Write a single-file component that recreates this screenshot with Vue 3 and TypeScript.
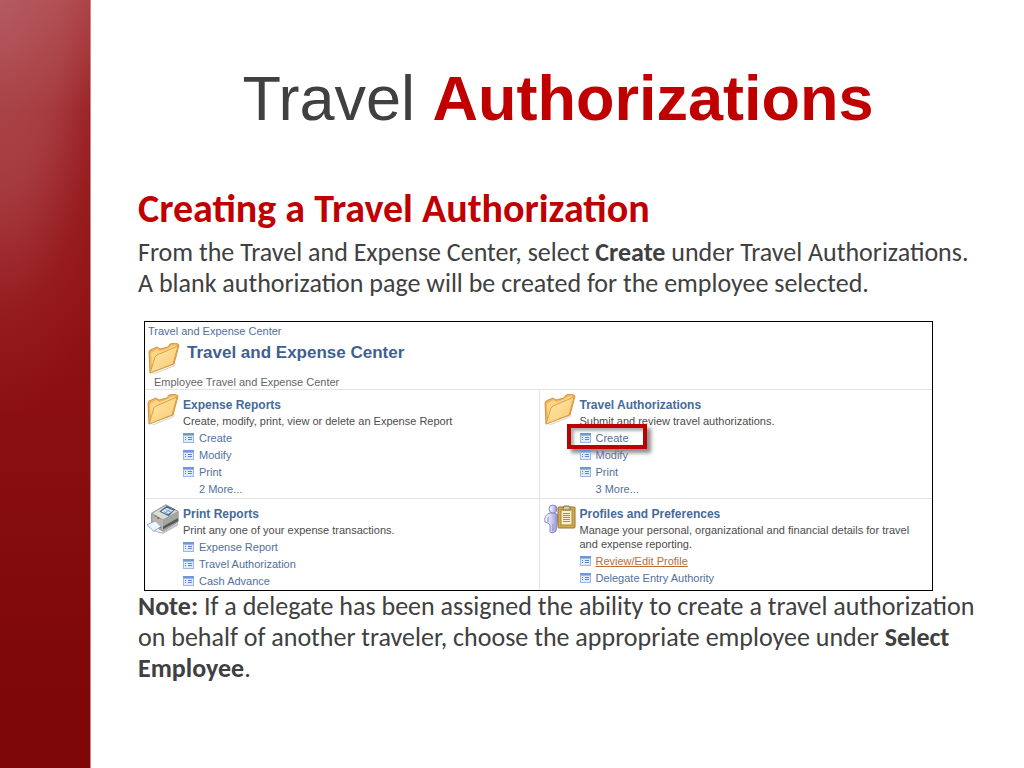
<script setup lang="ts">
interface Entry {
  label: string
  icon: boolean
  active?: boolean
  marked?: boolean
}
interface Section {
  title: string
  text: string
  art: 'folder' | 'printer' | 'profile'
  entries: Entry[]
}

const link = (label: string): Entry => ({ label, icon: true })
const more = (label: string): Entry => ({ label, icon: false })

const sections: Section[] = [
  {
    title: 'Expense Reports',
    text: 'Create, modify, print, view or delete an Expense Report',
    art: 'folder',
    entries: [link('Create'), link('Modify'), link('Print'), more('2 More...')],
  },
  {
    title: 'Travel Authorizations',
    text: 'Submit and review travel authorizations.',
    art: 'folder',
    entries: [{ label: 'Create', icon: true, marked: true }, link('Modify'), link('Print'), more('3 More...')],
  },
  {
    title: 'Print Reports',
    text: 'Print any one of your expense transactions.',
    art: 'printer',
    entries: [link('Expense Report'), link('Travel Authorization'), link('Cash Advance')],
  },
  {
    title: 'Profiles and Preferences',
    text: 'Manage your personal, organizational and financial details for travel and expense reporting.',
    art: 'profile',
    entries: [{ label: 'Review/Edit Profile', icon: true, active: true }, link('Delegate Entry Authority')],
  },
]
</script>

<template>
  <div class="slide">
    <div class="band"></div>
    <main class="content">
      <h1>Travel <strong>Authorizations</strong></h1>
      <h2>Creating a Travel Authorization</h2>
      <p class="copy">
        From the Travel and Expense Center, select <b>Create</b> under Travel Authorizations. A blank
        authorization page will be created for the employee selected.
      </p>

      <svg class="defs" width="0" height="0" aria-hidden="true">
        <defs>
          <linearGradient id="paper" x1="0" y1="0" x2="1" y2="1">
            <stop offset="0" stop-color="#ffe9a8" />
            <stop offset="1" stop-color="#fac973" />
          </linearGradient>
          <linearGradient id="body" x1="0" y1="0" x2="1" y2="0">
            <stop offset="0" stop-color="#ffffff" />
            <stop offset="0.5" stop-color="#d0d0f4" />
            <stop offset="1" stop-color="#8c8cd0" />
          </linearGradient>
          <symbol id="folder" viewBox="0 0 32 32">
            <path d="M4 31 26 22 28 20 27 23 7 31Z" fill="#dcd9d2" />
            <path d="M1 9 2 7 9 4 12 6 20 4 22 1 28 0 31 2 26 21 2 30Z" fill="#f3b65c" stroke="#cf9446" />
            <path d="M3 10 9 6 12 8 21 5 23 3 28 2 27 5 7 14 4 24Z" fill="#ffd58a" />
            <path d="M2 30 7 14 9 12 30 3 25 21Z" fill="url(#paper)" stroke="#dca04a" />
          </symbol>
          <symbol id="printer" viewBox="0 0 34 32">
            <path d="M6 27 16 30 33 20 33 23 17 32 7 29Z" fill="#c4c4c4" />
            <path d="M5 10 20 1 33 8 33 19 17 29 5 22Z" fill="#b4b6b2" stroke="#83857f" />
            <path d="M5 10 20 1 33 8 17 17Z" fill="#dcdcd7" stroke="#999a94" />
            <path d="M17 17 33 8 33 19 17 29Z" fill="#a3a5a0" />
            <path d="M17 24 33 15 33 18 17 27Z" fill="#555753" />
            <path d="M13 8 21 2 30 6 23 13Z" fill="#4c6487" />
            <path d="M15 8 21 4 28 7 22 11Z" fill="#d9edff" />
            <path d="M18 8 23 11M20 6 26 9M18 10 26 5" stroke="#7ea0c8" fill="none" />
            <path d="M6 19 15 24 15 26 6 22Z" fill="#555" />
            <path d="M0 22 9 18 15 24 7 29Z" fill="#eef5ff" stroke="#8ba3cc" />
            <path d="M8 12h2v2h-2z" fill="#26c04a" />
            <path d="M11 14h2v2h-2z" fill="#e03a2a" />
          </symbol>
          <symbol id="profile" viewBox="0 0 32 30">
            <path d="M6 9 C2 10 0 14 1 18 L4 19 6 21 6 28 9 29 12 27 13 20 14 11 11 9Z" fill="url(#body)" stroke="#8a8ac6" />
            <path d="M4 13v5M9 20v7" stroke="#8a8ac6" />
            <circle cx="9" cy="5" r="4" fill="url(#body)" stroke="#8a8ac6" />
            <rect x="14" y="3" width="17" height="21" rx="1" fill="#d3aa4e" stroke="#94752f" />
            <rect x="17" y="6" width="11" height="15" fill="#fbf0cd" stroke="#a98539" />
            <path d="M19 4 20 2 25 2 26 4 26 6 19 6Z" fill="#d8cba0" stroke="#80703f" />
            <path d="M19 9.500h7M19 11.500h7M19 13.500h7M19 15.500h7M19 17.500h7" stroke="#a58a64" />
          </symbol>
          <symbol id="page" viewBox="0 0 11 10">
            <rect width="11" height="10" fill="#9db8e6" />
            <rect width="11" height="2" fill="#6f98dc" />
            <rect x="1" y="3" width="9" height="6" fill="#dfeafb" />
            <path d="M2 4h1v1h-1zM2 6h1v1h-1zM5 4h4v1h-4zM5 6h4v1h-4z" fill="#5d87d0" />
          </symbol>
        </defs>
      </svg>

      <section class="panel">
        <header>
          <a class="crumb" href="#">Travel and Expense Center</a>
          <div class="heading">
            <svg class="art" aria-hidden="true"><use href="#folder" /></svg>
            <h3>Travel and Expense Center</h3>
          </div>
          <p class="sub">Employee Travel and Expense Center</p>
        </header>
        <div class="grid">
          <article v-for="s in sections" :key="s.title" class="cell">
            <svg class="art" aria-hidden="true"><use :href="'#' + s.art" /></svg>
            <div>
              <h4><a href="#">{{ s.title }}</a></h4>
              <p>{{ s.text }}</p>
              <ul>
                <li v-for="e in s.entries" :key="e.label" :class="{ marked: e.marked }">
                  <svg v-if="e.icon" class="page" aria-hidden="true"><use href="#page" /></svg>
                  <span v-else class="page"></span>
                  <a href="#" :class="{ active: e.active }">{{ e.label }}</a>
                </li>
              </ul>
            </div>
          </article>
        </div>
      </section>

      <p class="copy">
        <b>Note:</b> If a delegate has been assigned the ability to create a travel authorization on
        behalf of another traveler, choose the appropriate employee under <b>Select Employee</b>.
      </p>
    </main>
  </div>
</template>

<style>
body {
  background: #fff;
}
</style>

<style scoped>
.slide {
  display: grid;
  grid-template-columns: 91px 1fr;
  min-height: 100vh;
  font-family: Carlito, Lato, sans-serif;
  color: #404040;
}
.band {
  border-right: 1px solid #c98c8e;
  background:
    radial-gradient(ellipse 140px 420px at 0 0, rgba(190, 120, 125, 0.55), rgba(190, 110, 115, 0.42) 45%, rgba(190, 100, 105, 0.1) 75%, transparent),
    linear-gradient(to bottom, rgba(175, 70, 75, 0.7), transparent 110px),
    linear-gradient(#96181b, #921417 35%, #8a0f12 55%, #7f080a 85%, #7d0709);
}
.content {
  padding: 61px 46px 0 47px;
}
h1,
h2,
h3,
h4,
p,
ul {
  margin: 0;
  padding: 0;
}
h1 {
  font: 400 63px/74px "Liberation Sans", Arial, sans-serif;
  text-align: center;
}
h1 strong {
  color: #c00000;
}
h2 {
  margin-top: 50px;
  font-size: 40px;
  line-height: 48px;
  font-weight: 700;
  color: #c00000;
}
.copy {
  font-size: 26px;
  line-height: 31px;
  margin-top: 4px;
}
.defs {
  display: block;
}
.panel {
  margin: 22px 45px 0 6px;
  border: 1px solid #000;
  background: #fff;
  font: 11px/14px "Liberation Sans", Arial, sans-serif;
  color: #4c4c4c;
}
.panel + .copy {
  margin-top: 0;
}
a {
  color: #52709c;
  text-decoration: none;
}
header {
  padding: 2px 4px 0 3px;
}
.crumb {
  display: block;
}
.heading {
  display: flex;
  align-items: flex-end;
  gap: 7px;
  height: 37px;
}
.art {
  width: 32px;
  height: 32px;
  flex: none;
}
h3 {
  align-self: flex-start;
  margin-top: 2px;
  font-size: 17px;
  line-height: 26px;
  color: #3f5f93;
}
.sub {
  padding-left: 6px;
  color: #666;
}
.grid {
  display: grid;
  grid-template-columns: 1fr 1fr;
}
.cell {
  display: flex;
  gap: 4px;
  padding: 4px 3px 1px 2px;
  border-top: 1px solid #e4e4e4;
}
.cell:nth-child(even) {
  border-left: 1px solid #e4e4e4;
  padding-left: 4px;
}
h4 {
  margin-top: 3px;
  font-size: 12px;
  line-height: 16px;
}
h4 a {
  color: #466a9a;
}
h4 + p {
  margin-top: 1px;
}
ul {
  margin-top: 1px;
  list-style: none;
}
li {
  position: relative;
  display: flex;
  align-items: center;
  gap: 5px;
  height: 17px;
}
.page {
  width: 11px;
  height: 10px;
  flex: none;
}
.active {
  color: #c06a35;
  text-decoration: underline;
}
.marked::after {
  content: "";
  position: absolute;
  left: -13px;
  top: -5px;
  width: 72px;
  height: 17px;
  border: 4px solid #c00000;
  box-shadow: 4px 4px 4px rgba(0, 0, 0, 0.45), inset 3px 3px 3px rgba(0, 0, 0, 0.3);
  pointer-events: none;
}
</style>
